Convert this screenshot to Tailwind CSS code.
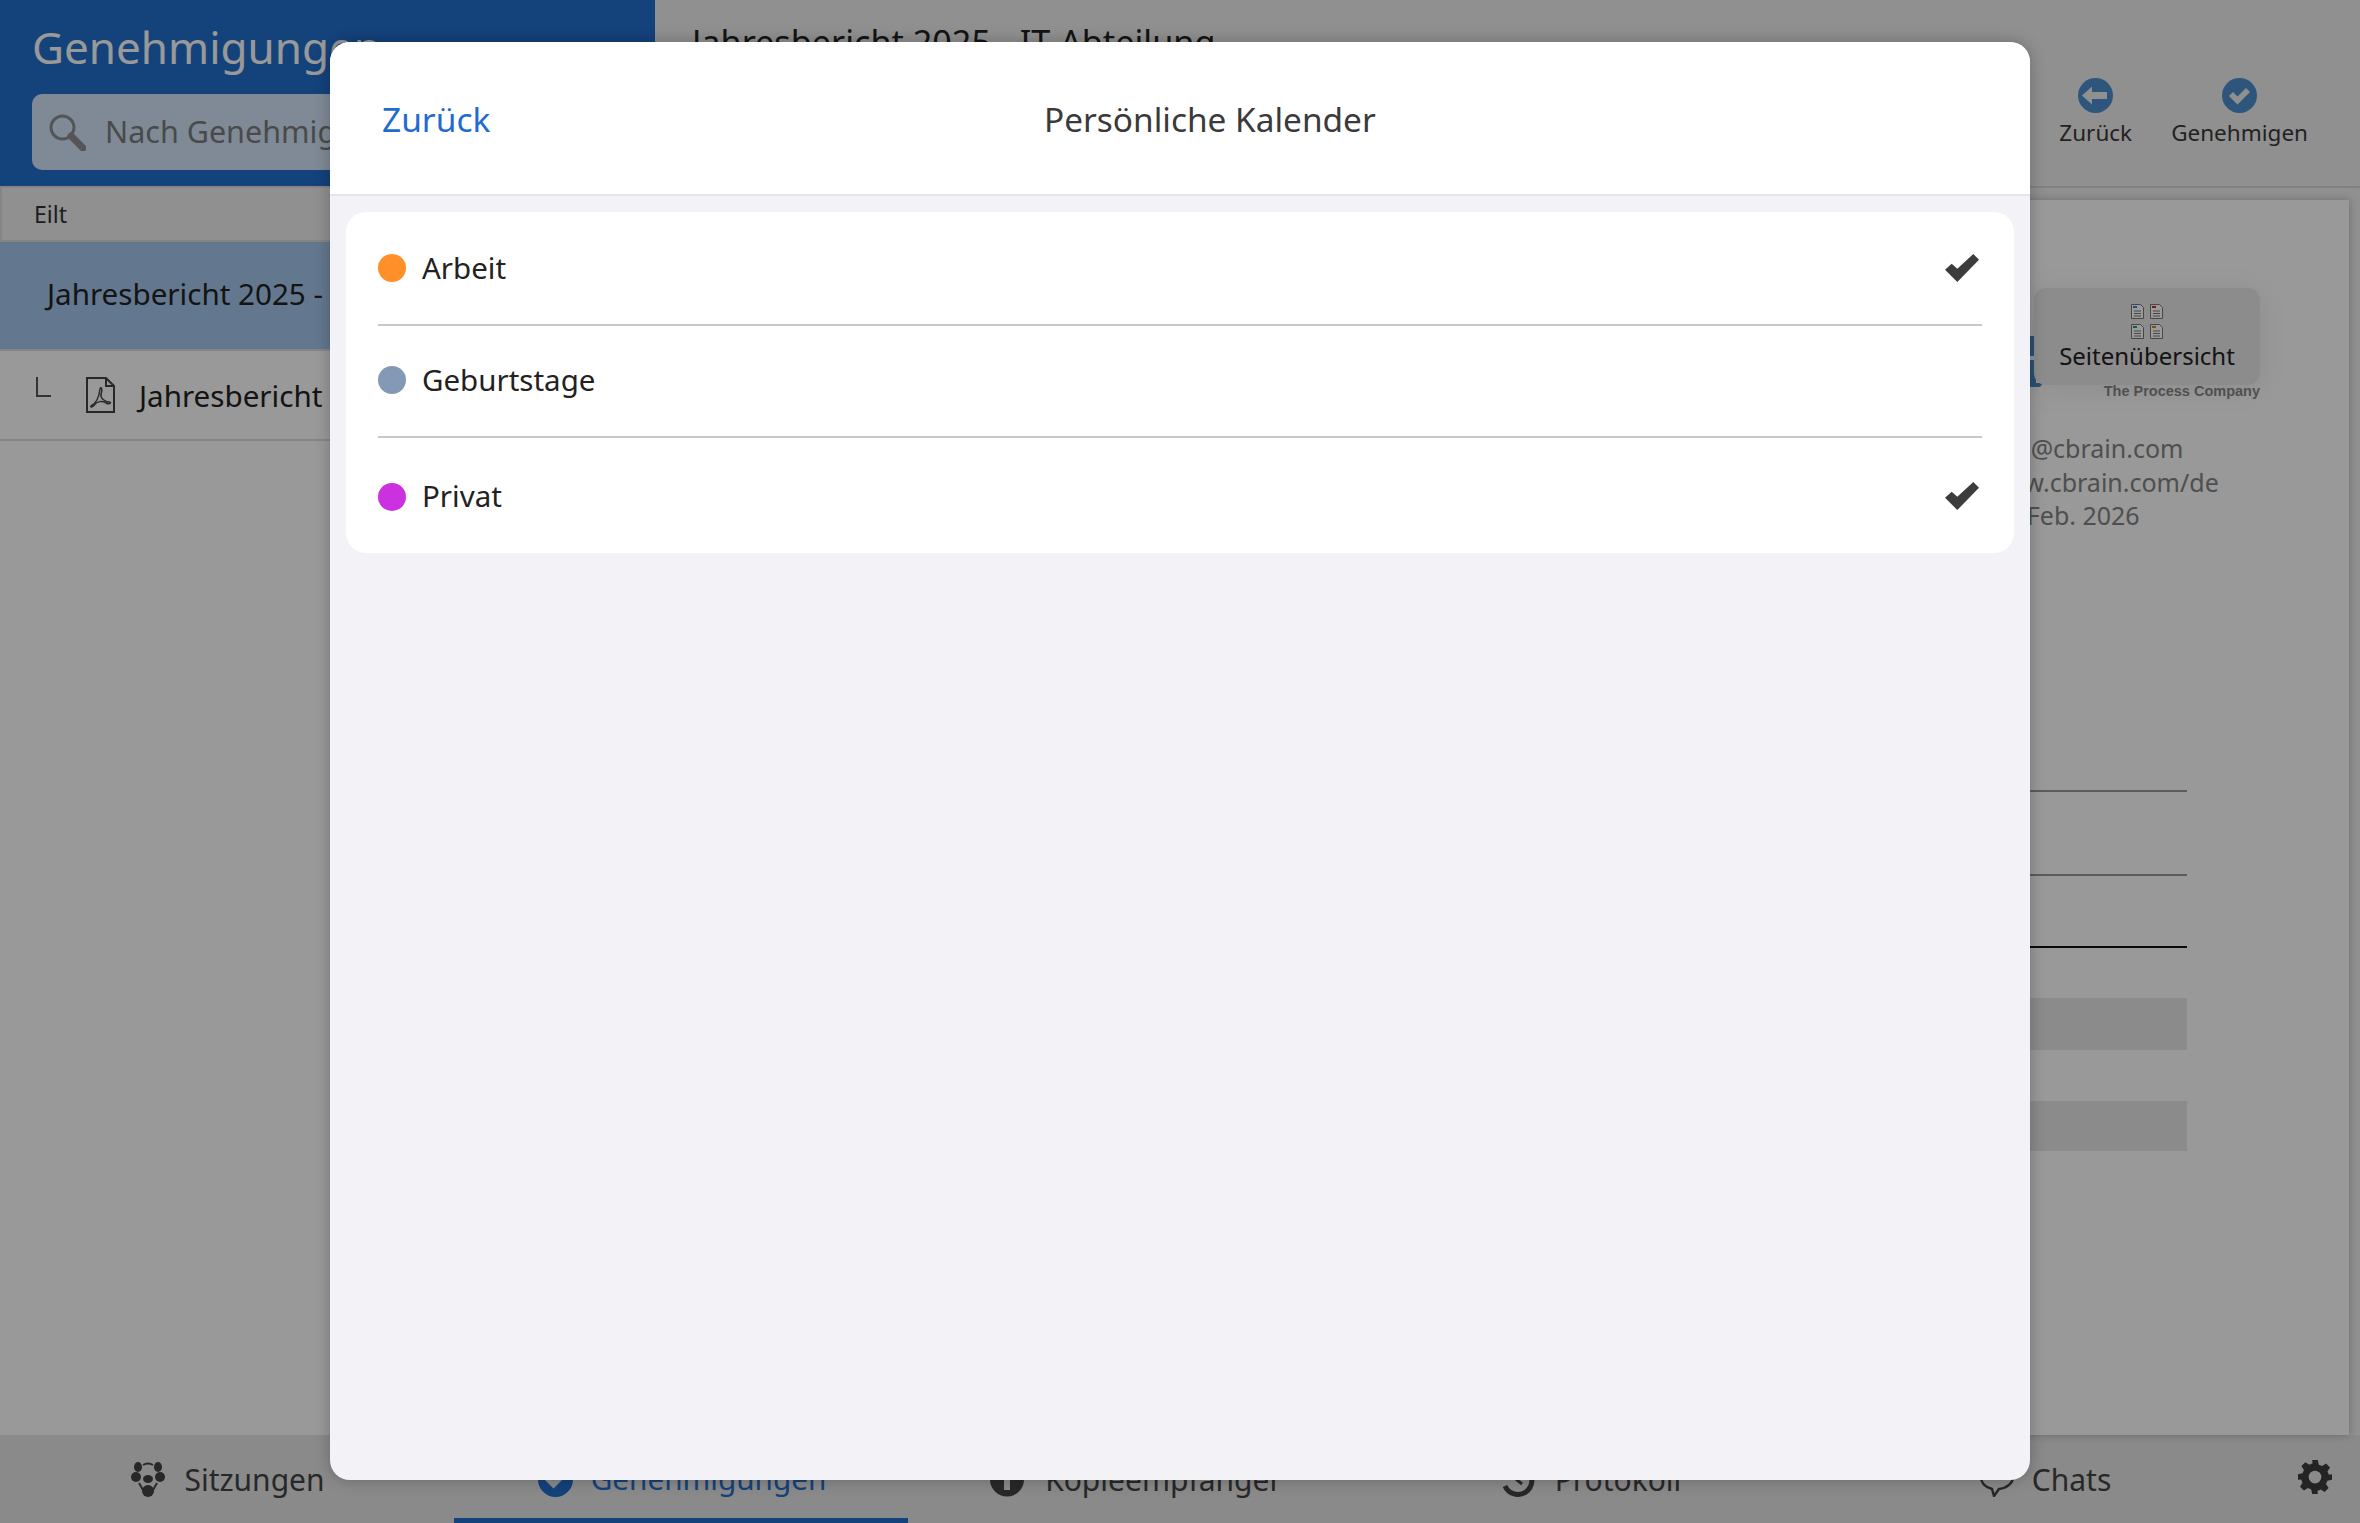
<!doctype html>
<html lang="de">
<head>
<meta charset="utf-8">
<title>Persönliche Kalender</title>
<script src="https://cdn.jsdelivr.net/npm/@tailwindcss/browser@4"></script>
</head>
<body class="font-['Noto_Sans',sans-serif] overflow-hidden">
<div class="relative w-[2360px] h-[1523px] flex flex-col bg-[#f0f0f0] text-[#222]">

  <!-- app behind the dialog -->
  <div class="flex-1 flex min-h-0">
    <aside class="w-[655px] flex flex-col bg-white">
      <div class="h-[186px] bg-[#226ecd] pl-[32px] flex flex-col">
        <h1 class="text-[44px] leading-[60px] pt-[17px] h-[94px] font-normal text-white">Genehmigungen</h1>
        <div class="w-[600px] h-[76px] rounded-[10px] bg-[#d4e6fb] flex items-center pl-[17px] gap-[19px] text-[30.500px] text-[#7c7c7c]">
          <svg class="w-[37px] h-[37px]" viewBox="0 0 37 37"><circle cx="13.5" cy="13.5" r="11.5" fill="none" stroke="#8e8e93" stroke-width="3"/><path d="M22 22l12 12" stroke="#8e8e93" stroke-width="7" stroke-linecap="round"/></svg>
          <span>Nach Genehmigungen suchen</span>
        </div>
      </div>
      <div class="h-[56px] bg-[#f0f0f0] border-2 border-[#dedede] flex items-center pl-[32px] text-[23px] text-[#333]">Eilt</div>
      <div class="h-[107px] bg-[#a5c8ed] flex items-center pl-[47px] pb-[2px] text-[29.600px] whitespace-nowrap overflow-hidden">Jahresbericht 2025 - IT-Abteilung</div>
      <div class="h-[92px] border-y-2 border-[#dedede] flex items-start pt-[26px] whitespace-nowrap overflow-hidden">
        <span class="ml-[36px] w-[15px] h-[20px] border-l-2 border-b-2 border-[#555]"></span>
        <svg class="ml-[34px] w-[31px] h-[36px]" viewBox="0 0 31 36" fill="none" stroke="#444" stroke-width="2"><path d="M2 1h19l8 8v26H2z"/><path d="M21 1v8h8"/><path d="M6 29c4-2 8-8 9-17 1-3 3 0 1 5-1 4 4 8 8 8 3 0 1 3-3 1-4-3-9-1-11 1-2 3-5 4-4 2z" stroke-width="1.5"/></svg>
        <span class="ml-[23px] text-[29.600px] leading-[38px]">Jahresbericht 2025</span>
      </div>
    </aside>

    <main class="flex-1 flex flex-col min-w-0">
      <header class="h-[188px] border-b-2 border-[#d8d8d8] flex justify-between pr-[52px] pl-[37px]">
        <h2 class="text-[34.200px] leading-[48px] pt-[18px] font-normal">Jahresbericht 2025 - IT-Abteilung</h2>
        <div class="flex gap-[39px] pt-[78px]">
          <button class="flex flex-col items-center text-[22.500px] leading-[40px] text-[#3a3a3a]">
            <svg class="w-[35px] h-[35px]" viewBox="0 0 35 35"><circle cx="17.5" cy="17.5" r="17.5" fill="#4e8fd0"/><path d="M4 17.5L14 8.500v5.500h15v7H14v5.500z" fill="#f0f0f0"/></svg>
            Zurück
          </button>
          <button class="flex flex-col items-center text-[22.500px] leading-[40px] text-[#3a3a3a]">
            <svg class="w-[35px] h-[35px]" viewBox="0 0 35 35"><circle cx="17.500" cy="17.500" r="17.500" fill="#4e8fd0"/><path d="M7 18l4-4 4.500 4.500L24 10l4 4-12.500 12.500z" fill="#f0f0f0"/></svg>
            Genehmigen
          </button>
        </div>
      </header>

      <div class="flex-1 min-h-0 pt-[12px] pr-[11px] pl-[13px]">
        <section class="relative h-full bg-white shadow-[0_0_8px_rgba(0,0,0,0.25)] pl-[1317px]">
          <div class="w-[275px] pt-[181px] flex justify-end">
            <p class="font-['Liberation_Sans',sans-serif] font-bold text-[14.5px] leading-[20px] text-[#8a8a8a] whitespace-nowrap">The Process Company</p>
          </div>
          <div class="pt-[31px] text-[25px] leading-[33.500px] text-[#848484]">
            <p>info@cbrain.com</p>
            <p>www.cbrain.com/de</p>
            <p>26. Feb. 2026</p>
          </div>
          <div class="w-[202px] mt-[257px]">
            <div class="h-[2px] bg-[#999]"></div>
            <div class="h-[2px] mt-[82px] bg-[#999]"></div>
            <div class="h-[2px] mt-[70px] bg-[#111]"></div>
            <div class="h-[52px] mt-[50px] bg-[#e8e8e8]"></div>
            <div class="h-[50px] mt-[51px] bg-[#e8e8e8]"></div>
          </div>

          <!-- floating page overview + logo -->
          <span class="absolute left-[1358px] top-[136px] w-[10px] h-[20px] bg-[#4a8ac8]"></span>
          <span class="absolute left-[1358px] top-[160px] w-[10px] h-[24px] bg-[#4a8ac8]"></span>
          <span class="absolute left-[1362px] top-[183px] w-[12px] h-[4px] rounded-br-[4px] bg-[#4a8ac8]"></span>
          <button class="absolute left-[1366px] top-[88px] w-[226px] h-[97px] rounded-[12px] bg-[#eaeaea] shadow-[0_4px_30px_rgba(0,0,0,0.08)] flex flex-col items-center pt-[16px] text-[24px] leading-[34px] text-[#222]">
            <span class="grid grid-cols-2 gap-x-[6px] gap-y-[5px]">
              <svg class="w-[13px] h-[15px]" viewBox="0 0 13 15" fill="#fff" stroke="#777"><path d="M.5.5h9l3 3v11H.5z"/><path d="M3 7h7M3 9.500h7M3 12h7"/><path d="M2 3h4" stroke="#3b82f6" stroke-width="2"/></svg>
              <svg class="w-[13px] h-[15px]" viewBox="0 0 13 15" fill="#fff" stroke="#777"><path d="M.5.5h9l3 3v11H.5z"/><path d="M3 7h7M3 9.500h7M3 12h7"/><path d="M2 3h4" stroke="#dc2626" stroke-width="2"/></svg>
              <svg class="w-[13px] h-[15px]" viewBox="0 0 13 15" fill="#fff" stroke="#777"><path d="M.5.5h9l3 3v11H.5z"/><path d="M3 7h7M3 9.500h7M3 12h7"/><path d="M2 3h4" stroke="#16a34a" stroke-width="2"/></svg>
              <svg class="w-[13px] h-[15px]" viewBox="0 0 13 15" fill="#fff" stroke="#777"><path d="M.5.5h9l3 3v11H.5z"/><path d="M3 7h7M3 9.500h7M3 12h7"/><path d="M2 3h4" stroke="#ea7a0c" stroke-width="2"/></svg>
            </span>
            Seitenübersicht
          </button>
        </section>
      </div>
    </main>
  </div>

  <!-- bottom tabs -->
  <nav class="h-[88px] shrink-0 bg-[#e6e6e6] grid grid-cols-[454px_454px_454px_454px_454px_90px] text-[30px] text-[#444]">
    <a class="flex items-center justify-center gap-[19px] pl-[2px]">
      <svg class="w-[34px] h-[35px]" viewBox="0 0 34 35" fill="#444"><ellipse cx="7" cy="5" rx="4" ry="5"/><ellipse cx="27" cy="5" rx="4" ry="5"/><ellipse cx="5" cy="15" rx="5" ry="5"/><ellipse cx="29" cy="15" rx="5" ry="5"/><ellipse cx="17" cy="17" rx="5" ry="4"/><ellipse cx="17" cy="29" rx="6" ry="6"/><path d="M12 3q5-3 10 0M8 21l4 7M26 21l-4 7" fill="none" stroke="#444" stroke-width="2"/></svg>
      <span>Sitzungen</span>
    </a>
    <a class="relative flex items-center justify-center gap-[18px] pl-[2px] text-[29.700px] text-[#226ecd]">
      <svg class="w-[35px] h-[35px]" viewBox="0 0 35 35"><circle cx="17.500" cy="17.500" r="17.500" fill="#226ecd"/><path d="M7 18l4-4 4.500 4.500L24 10l4 4-12.500 12.500z" fill="#e6e6e6"/></svg>
      <span>Genehmigungen</span>
      <span class="absolute left-0 right-0 bottom-0 h-[5px] bg-[#226ecd]"></span>
    </a>
    <a class="flex items-center justify-center gap-[21px] pl-[2px]">
      <svg class="w-[34px] h-[35px]" viewBox="0 0 34 35"><circle cx="17" cy="17.500" r="17" fill="#444"/><rect x="14" y="14" width="6" height="14" fill="#e6e6e6"/><circle cx="17" cy="8.500" r="3.500" fill="#e6e6e6"/></svg>
      <span>Kopieempfänger</span>
    </a>
    <a class="flex items-center justify-center gap-[20px] pl-[2px]">
      <svg class="w-[36px] h-[35px]" viewBox="0 0 36 35" fill="none" stroke="#444" stroke-width="5"><path d="M7 11a14 14 0 1 1-1 13"/><path d="M18 10v8l5 4" stroke-width="3"/><path d="M0 7l9 1-1 8z" fill="#444" stroke="none"/></svg>
      <span>Protokoll</span>
    </a>
    <a class="flex items-center justify-center gap-[17px] pl-[4px]">
      <svg class="w-[36px] h-[35px]" viewBox="0 0 36 35" fill="none" stroke="#444" stroke-width="2.500"><path d="M18 2C8 2 2 8 2 15c0 6 4 10 11 12l2 7 5-7c8-1 14-6 14-12 0-7-7-13-16-13z"/></svg>
      <span>Chats</span>
    </a>
    <a class="flex items-center justify-center pb-[4px]">
      <svg class="w-[34px] h-[34px]" viewBox="0 0 24 24" fill="#3c3c3c"><path d="M10 0h4l.7 3.300 2.300 1 2.800-1.800 2.800 2.800-1.800 2.800 1 2.300L24 10v4l-3.200.7-1 2.300 1.800 2.800-2.800 2.800-2.800-1.800-2.300 1L14 24h-4l-.7-3.200-2.300-1-2.800 1.800-2.800-2.800 1.800-2.800-1-2.300L0 14v-4l3.200-.6 1-2.300L2.400 4.300l2.800-2.800L8 3.300l2.300-1zM12 7.500a4.500 4.500 0 1 0 0 9 4.500 4.500 0 0 0 0-9z" fill-rule="evenodd"/></svg>
    </a>
  </nav>

  <!-- dim layer -->
  <div class="absolute inset-0 bg-black/40"></div>

  <!-- calendar dialog -->
  <div class="absolute left-[330px] top-[42px] w-[1700px] h-[1438px] rounded-[20px] overflow-hidden bg-[#f2f2f7] shadow-[0_0_16px_rgba(0,0,0,0.25)] flex flex-col">
    <div class="relative h-[154px] shrink-0 bg-white border-b-2 border-[#e5e5ea] flex items-center">
      <a class="ml-[52px] text-[33.500px] text-[#1f6bd2] pt-[2px]">Zurück</a>
      <h3 class="absolute left-[714px] text-[33.400px] font-normal text-[#3a3a3a] pt-[2px] whitespace-nowrap">Persönliche Kalender</h3>
    </div>
    <ul class="mx-[16px] mt-[16px] rounded-[20px] bg-white text-[29.500px] text-[#222]">
      <li class="h-[112px] px-[32px] flex items-center gap-[16px]">
        <span class="w-[28px] h-[28px] rounded-full bg-[#ff8f28]"></span>
        <span class="flex-1">Arbeit</span>
        <svg class="w-[34px] h-[28px] mr-[3px] -mt-[1px]" viewBox="0 0 34 28" fill="#3c3c3c"><path d="M0 15.700 6.700 9.700l5.600 5L28.300 0 34 5.700 12.300 28z"/></svg>
      </li>
      <li class="h-[112px] mx-[32px] border-t-2 border-[#c8c8c8] flex items-center gap-[16px] pb-[2px]">
        <span class="w-[28px] h-[28px] rounded-full bg-[#8499b5]"></span>
        <span class="flex-1">Geburtstage</span>
      </li>
      <li class="h-[117px] mx-[32px] border-t-2 border-[#c8c8c8] flex items-center gap-[16px] pt-[2px]">
        <span class="w-[28px] h-[28px] rounded-full bg-[#cb31de]"></span>
        <span class="flex-1">Privat</span>
        <svg class="w-[34px] h-[28px] mr-[3px] -mt-[1px]" viewBox="0 0 34 28" fill="#3c3c3c"><path d="M0 15.700 6.700 9.700l5.600 5L28.300 0 34 5.700 12.300 28z"/></svg>
      </li>
    </ul>
  </div>
</div>
</body>
</html>
